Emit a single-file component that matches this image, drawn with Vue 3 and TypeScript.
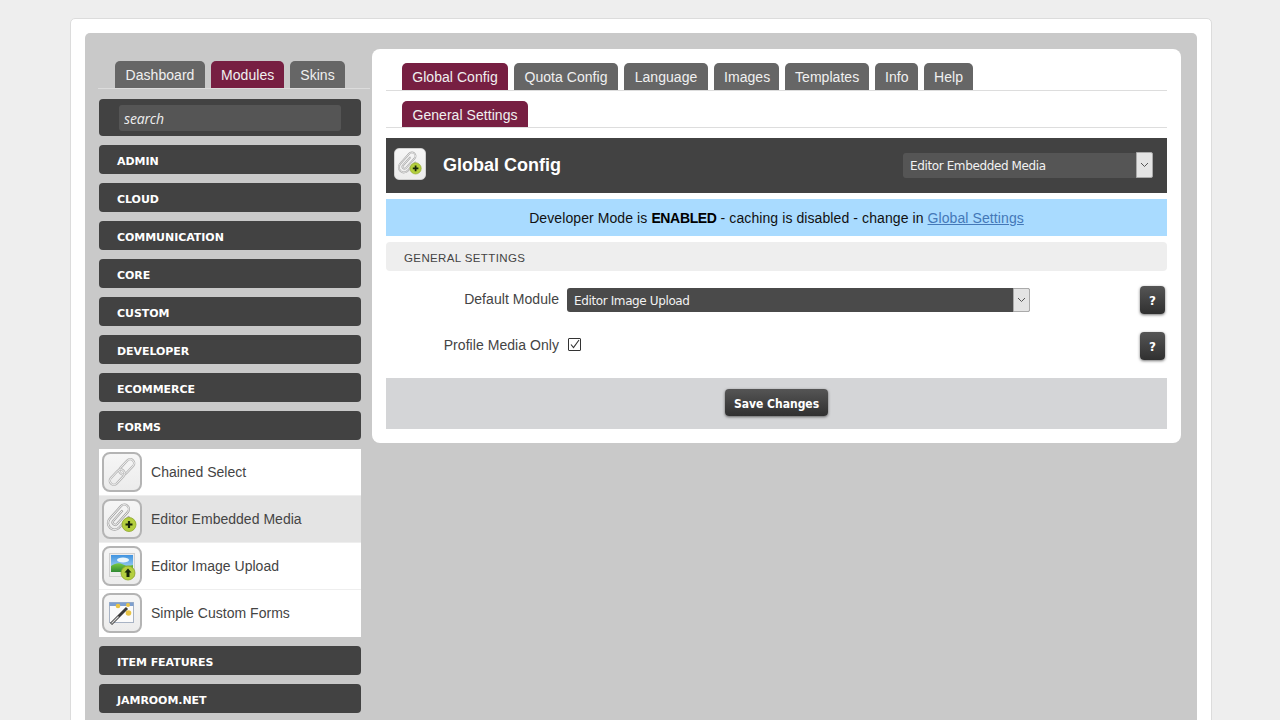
<script setup lang="ts">
const leftTabs = [
  { label: 'Dashboard', active: false, width: 90 },
  { label: 'Modules', active: true, width: 73 },
  { label: 'Skins', active: false, width: 55 },
]
const topTabs = [
  { label: 'Global Config', active: true, width: 106 },
  { label: 'Quota Config', active: false, width: 104 },
  { label: 'Language', active: false, width: 84 },
  { label: 'Images', active: false, width: 65 },
  { label: 'Templates', active: false, width: 84 },
  { label: 'Info', active: false, width: 43 },
  { label: 'Help', active: false, width: 49 },
]
const before = ['ADMIN', 'CLOUD', 'COMMUNICATION', 'CORE', 'CUSTOM', 'DEVELOPER', 'ECOMMERCE', 'FORMS']
const after = ['ITEM FEATURES', 'JAMROOM.NET']
const modules = [
  { label: 'Chained Select', icon: 'chain', active: false },
  { label: 'Editor Embedded Media', icon: 'clip', active: true },
  { label: 'Editor Image Upload', icon: 'image', active: false },
  { label: 'Simple Custom Forms', icon: 'wand', active: false },
]
</script>

<template>
  <div class="viewport">
    <svg class="defs" width="0" height="0" aria-hidden="true">
      <defs>
        <linearGradient id="sky" x1="0" y1="0" x2="0" y2="1">
          <stop offset="0" stop-color="#3f93e0" />
          <stop offset="1" stop-color="#bfe2f5" />
        </linearGradient>
        <linearGradient id="grass" x1="0" y1="0" x2="0" y2="1">
          <stop offset="0" stop-color="#79c93f" />
          <stop offset="1" stop-color="#2f8a34" />
        </linearGradient>
        <symbol id="i-chain" viewBox="0 0 40 40">
          <g transform="rotate(43 20 20)" fill="none">
            <rect x="16" y="4" width="8" height="18" rx="4" stroke="#b7b7b7" stroke-width="2.400" />
            <rect x="16" y="4" width="8" height="18" rx="4" stroke="#f1f1f1" stroke-width=".9" />
            <rect x="16" y="18" width="8" height="18" rx="4" stroke="#b7b7b7" stroke-width="2.400" />
            <rect x="16" y="18" width="8" height="18" rx="4" stroke="#f1f1f1" stroke-width=".9" />
          </g>
        </symbol>
        <symbol id="i-clip" viewBox="0 0 40 40">
          <g transform="rotate(42 17.500 18.500)" fill="none">
            <path d="M15 12v13a2.500 2.500 0 0 0 5 0V9a4.500 4.500 0 0 0-9 0v17a6.500 6.500 0 0 0 13 0V12" stroke="#a5a5a5" stroke-width="2.300" stroke-linecap="round" />
            <path d="M15 12v13a2.500 2.500 0 0 0 5 0V9a4.500 4.500 0 0 0-9 0v17a6.500 6.500 0 0 0 13 0V12" stroke="#f4f4f4" stroke-width=".9" stroke-linecap="round" />
          </g>
          <circle cx="27" cy="25.500" r="7" fill="#b4cf3e" stroke="#8ea62a" stroke-width=".8" />
          <path d="M27 22v7M23.500 25.500h7" stroke="#16240a" stroke-width="2.200" />
        </symbol>
        <symbol id="i-image" viewBox="0 0 40 40">
          <rect x="7.500" y="7.500" width="25" height="23" fill="#ececec" stroke="#cfcfcf" />
          <rect x="9" y="9" width="22" height="17" fill="url(#sky)" />
          <ellipse cx="21" cy="14" rx="6" ry="2.500" fill="#eaf6fc" />
          <path d="M9 20c5-3 8-3.500 12-1.500s7 1 10 .5v7H9z" fill="url(#grass)" />
          <circle cx="26" cy="27" r="7" fill="#b4cf3e" stroke="#8ea62a" stroke-width=".8" />
          <path d="M26 22.500l-3.500 4h2v4.500h3v-4.500h2z" fill="#16240a" />
        </symbol>
        <symbol id="i-wand" viewBox="0 0 40 40">
          <rect x="7.500" y="9.500" width="24" height="20" fill="#fbfbfb" stroke="#a8b3c4" />
          <rect x="7.500" y="9.500" width="24" height="3.500" fill="#7d9fcf" />
          <path d="M9 31l16-16" stroke="#3a3a3a" stroke-width="3" />
          <path d="M9.500 30.500l7-7" stroke="#d8d8d8" stroke-width="1.300" />
          <circle cx="16" cy="13" r="2.300" fill="#e9c445" />
          <circle cx="26" cy="12" r="2" fill="#e9c445" />
          <circle cx="26.500" cy="20" r="2.800" fill="#e9c445" />
        </symbol>
      </defs>
    </svg>

    <div class="shell">
      <div class="panel">
        <aside class="side">
          <nav class="tabs side-tabs">
            <a v-for="t in leftTabs" :key="t.label" class="tab" :class="{ on: t.active }" :style="{ width: t.width + 'px' }">{{ t.label }}</a>
          </nav>
          <div class="search"><input class="search-input" type="text" placeholder="search" /></div>
          <div v-for="c in before" :key="c" class="cat">{{ c }}</div>
          <ul class="mods">
            <li v-for="m in modules" :key="m.label" class="mod" :class="{ on: m.active }">
              <span class="ico"><svg width="40" height="40"><use :href="'#i-' + m.icon" /></svg></span>
              <span class="mod-name">{{ m.label }}</span>
            </li>
          </ul>
          <div v-for="c in after" :key="c" class="cat">{{ c }}</div>
        </aside>

        <main class="card">
          <nav class="tabs top-tabs">
            <a v-for="t in topTabs" :key="t.label" class="tab" :class="{ on: t.active }" :style="{ width: t.width + 'px' }">{{ t.label }}</a>
          </nav>
          <nav class="tabs sub-tabs">
            <a class="tab on">General Settings</a>
          </nav>

          <header class="head">
            <span class="ico small"><svg width="32" height="32"><use href="#i-clip" /></svg></span>
            <h1 class="title">Global Config</h1>
            <div class="pick head-pick">
              <select class="sel"><option>Editor Embedded Media</option></select>
              <span class="arrow"><svg width="9" height="6" viewBox="0 0 9 6"><path d="M1 1l3.500 3.500L8 1" fill="none" stroke="#555" /></svg></span>
            </div>
          </header>

          <p class="notice">
            Developer Mode is <b>ENABLED</b> - caching is disabled - change in <a class="link">Global Settings</a>
          </p>

          <h2 class="section">GENERAL SETTINGS</h2>

          <div class="row first">
            <label class="lbl">Default Module</label>
            <div class="pick form-pick">
              <select class="sel"><option>Editor Image Upload</option></select>
              <span class="arrow"><svg width="9" height="6" viewBox="0 0 9 6"><path d="M1 1l3.500 3.500L8 1" fill="none" stroke="#555" /></svg></span>
            </div>
            <button class="help" type="button">?</button>
          </div>
          <div class="row second">
            <label class="lbl">Profile Media Only</label>
            <span class="check"><svg width="13" height="13" viewBox="0 0 13 13"><path d="M3 6.500l2.500 3L11 2" fill="none" stroke="#333" stroke-width="1.100" /></svg></span>
            <button class="help" type="button">?</button>
          </div>

          <div class="submit"><button class="save" type="button">Save Changes</button></div>
        </main>
      </div>
    </div>
  </div>
</template>

<style>
html, body { margin: 0; background: #eeeeee; overflow: hidden; }
</style>

<style scoped>
.viewport {
  height: 720px;
  overflow: hidden;
  box-sizing: border-box;
  padding: 18px 68px 0 70px;
  font-family: "Liberation Sans", Arial, sans-serif;
  color: #444;
}
.defs { position: absolute; }
.shell {
  background: #fff;
  border: 1px solid #dcdcdc;
  border-radius: 5px;
  padding: 14px 14px 20px;
}
.panel {
  display: flex;
  align-items: flex-start;
  gap: 11px;
  background: #c9c9c9;
  border-radius: 5px;
  padding: 16px 16px 20px 14px;
}
.side { width: 262px; flex: none; padding-top: 12px; }
.tabs { display: flex; gap: 6px; }
.tab {
  display: block;
  box-sizing: border-box;
  height: 27px;
  line-height: 28px;
  padding: 0 10px;
  background: #666;
  color: #f0f0f0;
  font-size: 14px;
  letter-spacing: .05px;
  text-align: center;
  white-space: nowrap;
  border-radius: 5px 5px 0 0;
}
.tab.on { background: #771f42; }
.side-tabs {
  margin: 0 -9px 0 -1px;
  padding-left: 17px;
  border-bottom: 1px solid #dcdcdc;
}
.search {
  background: #424242;
  border-radius: 4px;
  height: 37px;
  margin: 10px 0 9px;
  padding: 6px 20px;
  box-sizing: border-box;
}
.search-input {
  display: block;
  width: 100%;
  height: 26px;
  box-sizing: border-box;
  border: 0;
  border-radius: 3px;
  outline: 0;
  background: #555;
  padding: 0 5px;
  font: italic 14px "Open Sans", sans-serif;
  letter-spacing: -.15px;
  color: #eee;
}
.search-input::placeholder { color: #eee; opacity: 1; }
.cat {
  height: 29px;
  line-height: 33px;
  margin-bottom: 9px;
  padding-left: 18px;
  background: #424242;
  border-radius: 4px;
  color: #fff;
  font-family: "DejaVu Sans", sans-serif;
  font-weight: 700;
  font-size: 11px;
  letter-spacing: -.05px;
}
.mods { list-style: none; margin: 0 0 9px; padding: 0; background: #fff; }
.mod {
  display: flex;
  align-items: center;
  height: 47px;
  box-sizing: border-box;
  padding-left: 3px;
  background: #fff;
  border-bottom: 1px solid #eee;
  font-size: 14px;
  letter-spacing: .02px;
  color: #444;
}
.mod:last-child { border-bottom-color: #fff; }
.mod.on { background: #e4e4e4; }
.mod-name { margin-left: 9px; }
.ico {
  display: block;
  width: 40px;
  height: 40px;
  flex: none;
  box-sizing: border-box;
  background: linear-gradient(#f6f6f6, #ececec);
  border: 2px solid #b4b4b4;
  border-radius: 8px;
  overflow: hidden;
}
.ico svg { display: block; margin: -2px; }
.ico.small { width: 32px; height: 32px; margin-top: -3px; border: 1px solid #cfcfcf; border-radius: 5px; }
.ico.small svg { margin: -1px; }

.card {
  width: 809px;
  flex: none;
  box-sizing: border-box;
  background: #fff;
  border-radius: 8px;
  padding: 14px;
}
.top-tabs, .sub-tabs { padding-left: 16px; border-bottom: 1px solid #ddd; }
.sub-tabs { margin-top: 10px; }
.sub-tabs .tab { height: 26px; width: 126px; }
.head {
  display: flex;
  align-items: center;
  height: 55px;
  margin-top: 10px;
  padding: 0 14px 0 8px;
  background: #424242;
}
.title {
  margin: 0 0 0 17px;
  flex: 1;
  color: #fff;
  font-size: 18px;
  font-weight: 700;
}
.pick { position: relative; height: 25px; }
.head-pick { width: 250px; }
.form-pick { width: 463px; height: 24px; }
.sel {
  display: block;
  width: 100%;
  height: 100%;
  box-sizing: border-box;
  appearance: none;
  border: 0;
  border-radius: 3px;
  outline: 0;
  padding: 0 0 0 7px;
  background: #555;
  color: #f2f2f2;
  font: 12px "DejaVu Sans", sans-serif;
  letter-spacing: -.38px;
}
.form-pick .sel { background: #4a4a4a; padding-top: 2px; }
.arrow {
  position: absolute;
  top: 0;
  right: 0;
  bottom: 0;
  width: 17px;
  display: flex;
  align-items: center;
  justify-content: center;
  box-sizing: border-box;
  background: #e4e4e4;
  border: 1px solid #aaa;
  border-radius: 0 2px 2px 0;
}
.head-pick .arrow { top: -1px; }
.notice {
  margin: 6px 0 0;
  height: 37px;
  line-height: 38px;
  text-align: center;
  background: #a9dbff;
  color: #111;
  font-size: 14px;
  letter-spacing: .09px;
}
.notice b { color: #000; letter-spacing: -.35px; }
.link { color: #4478b8; text-decoration: underline; }
.section {
  margin: 6px 0 0;
  height: 29px;
  line-height: 32px;
  padding-left: 18px;
  background: #eee;
  border-radius: 4px;
  color: #444;
  font-size: 11.500px;
  font-weight: 400;
  letter-spacing: .38px;
}
.row { display: flex; align-items: center; padding-right: 2px; }
.row.first { height: 28px; margin-top: 15px; }
.row.second { height: 28px; margin-top: 18px; }
.lbl { width: 173px; flex: none; text-align: right; font-size: 14px; letter-spacing: .05px; color: #444; }
.row.first .lbl { margin-top: -2px; }
.row.second .lbl { margin-top: -2px; }
.row .pick, .check { margin-left: 8px; }
.check {
  display: block;
  width: 13px;
  height: 13px;
  margin-left: 9px;
  margin-top: -4px;
  box-sizing: border-box;
  border: 1px solid #333;
  border-radius: 1px;
  background: #fff;
}
.check svg { display: block; margin: -1px; }
.help {
  margin-left: auto;
  width: 25px;
  height: 28px;
  padding: 2px 0 0;
  border: 0;
  border-radius: 4px;
  background: linear-gradient(#555, #303030);
  box-shadow: 0 1px 3px rgba(0,0,0,.55);
  color: #fff;
  font: 700 12px "DejaVu Sans", sans-serif;
}
.submit {
  display: flex;
  justify-content: center;
  margin-top: 18px;
  height: 51px;
  padding-top: 11px;
  box-sizing: border-box;
  background: #d4d5d7;
}
.save {
  width: 103px;
  height: 27px;
  padding: 2px 0 0;
  border: 0;
  border-radius: 4px;
  background: linear-gradient(#555, #303030);
  box-shadow: 0 1px 3px rgba(0,0,0,.55);
  color: #fff;
  font: 700 12px "DejaVu Sans Condensed", "DejaVu Sans", sans-serif;
}
</style>
